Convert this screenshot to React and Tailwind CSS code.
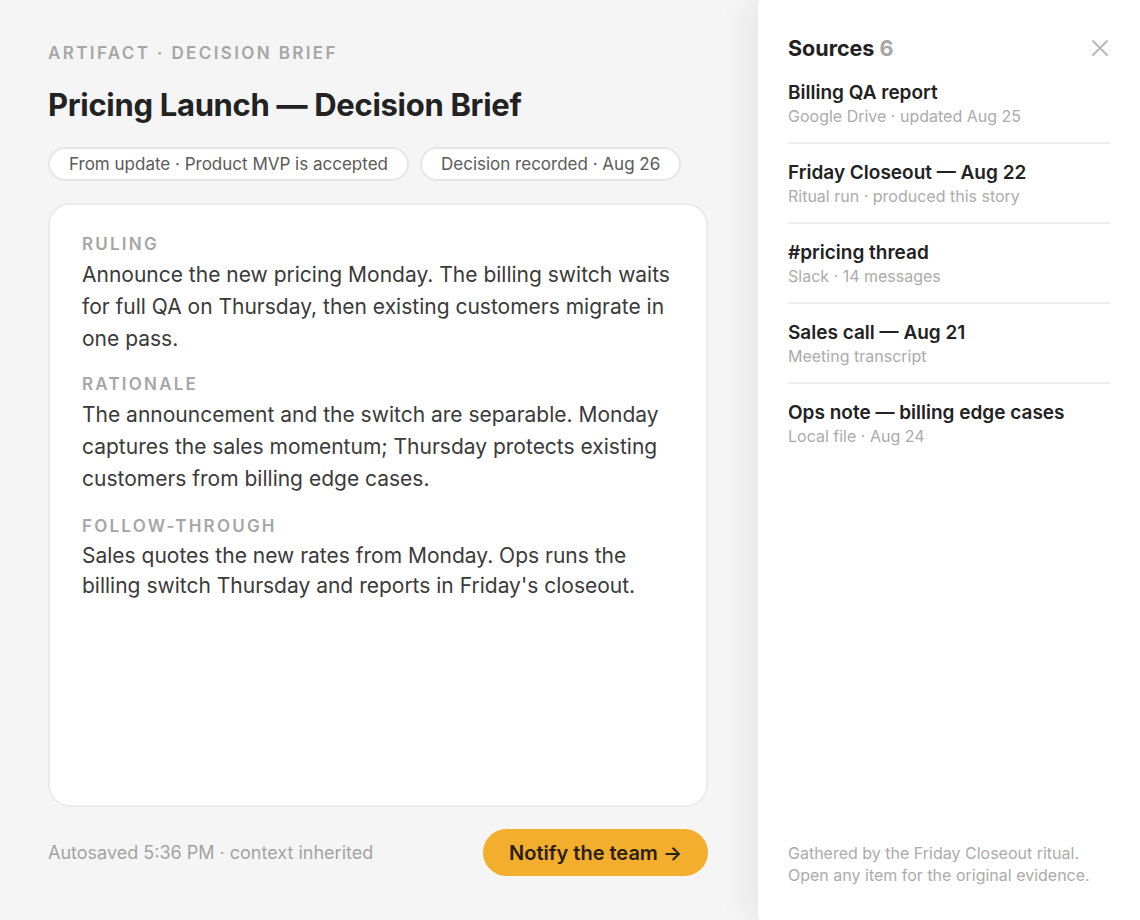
import React from "react";

const sources = [
  { title: "Billing QA report", meta: "Google Drive · updated Aug 25" },
  { title: "Friday Closeout — Aug 22", meta: "Ritual run · produced this story" },
  { title: "#pricing thread", meta: "Slack · 14 messages" },
  { title: "Sales call — Aug 21", meta: "Meeting transcript" },
  { title: "Ops note — billing edge cases", meta: "Local file · Aug 24" },
];

const sections = [
  {
    label: "RULING",
    gap: "",
    lead: "leading-[32px]",
    body: "Announce the new pricing Monday. The billing switch waits for full QA on Thursday, then existing customers migrate in one pass.",
  },
  {
    label: "RATIONALE",
    gap: "mt-[18px]",
    lead: "leading-[32px]",
    body: "The announcement and the switch are separable. Monday captures the sales momentum; Thursday protects existing customers from billing edge cases.",
  },
  {
    label: "FOLLOW-THROUGH",
    gap: "mt-[20px]",
    lead: "leading-[30px]",
    body: "Sales quotes the new rates from Monday. Ops runs the billing switch Thursday and reports in Friday's closeout.",
  },
];

function CloseIcon() {
  return (
    <svg width="18" height="18" viewBox="0 0 18 18" fill="none" stroke="#b5b5b5" strokeWidth="1.8" strokeLinecap="round">
      <path d="M2 2 L16 16 M16 2 L2 16" />
    </svg>
  );
}

export default function App() {
  return (
    <div
      className="flex h-[920px] w-[1140px] bg-[#f5f5f5] text-[#262626] overflow-hidden"
      style={{ fontFamily: "Inter, 'Noto Sans', sans-serif" }}
    >
      {/* Brief */}
      <main className="flex w-[758px] shrink-0 flex-col pl-12 pr-[50px] pt-[42px] pb-[44px]">
        <div className="text-[17px] font-semibold tracking-[0.14em] text-[#a6a6a6] leading-[22px]">
          ARTIFACT · DECISION BRIEF
        </div>
        <h1 className="mt-[23px] text-[31px] font-bold leading-[36px] tracking-[-0.01em] text-[#222]">
          Pricing Launch — Decision Brief
        </h1>
        <div className="mt-[24px] flex gap-[11px]">
          <span className="rounded-full border-2 border-[#e6e6e6] bg-white px-[19px] py-[3px] text-[17px] leading-[24px] text-[#5a5a5a]">
            From update · Product MVP is accepted
          </span>
          <span className="rounded-full border-2 border-[#e6e6e6] bg-white px-[19px] py-[3px] text-[17px] leading-[24px] text-[#5a5a5a]">
            Decision recorded · Aug 26
          </span>
        </div>

        <section className="mt-[22px] flex-1 rounded-[22px] border-2 border-[#ebebeb] bg-white px-[32px] pt-[28px]">
          {sections.map((s) => (
            <div key={s.label} className={s.gap}>
              <div className="text-[17px] font-semibold tracking-[0.13em] leading-[22px] text-[#a6a6a6]">
                {s.label}
              </div>
              <p className={"mt-[4px] text-[21px] text-[#3a3a3a] " + s.lead}>{s.body}</p>
            </div>
          ))}
        </section>

        <footer className="mt-[22px] flex items-center justify-between">
          <span className="text-[18px] text-[#a3a3a3]">Autosaved 5:36 PM · context inherited</span>
          <button className="h-[47px] rounded-full bg-[#f4ae2e] px-[26px] text-[20px] font-semibold text-[#2a2110]">
            Notify the team →
          </button>
        </footer>
      </main>

      {/* Sources */}
      <aside className="relative flex w-[382px] shrink-0 flex-col bg-white pl-[30px] pr-[30px] pt-[34px] pb-[34px] shadow-[-12px_0_28px_rgba(0,0,0,0.06)]">
        <div className="flex items-center justify-between">
          <h2 className="text-[21.5px] font-bold leading-[28px] text-[#222]">
            Sources <span className="text-[#a6a6a6]">6</span>
          </h2>
          <button className="mr-[1px]">
            <CloseIcon />
          </button>
        </div>
        <ul className="mt-[18px]">
          {sources.map((s, i) => (
            <li
              key={s.title}
              className={"pb-[16px] " + (i < sources.length - 1 ? "border-b-2 border-[#efefef] mb-[16px]" : "")}
            >
              <div className="text-[19px] font-semibold leading-[26px] text-[#222]">{s.title}</div>
              <div className="text-[16px] leading-[20px] text-[#ababab]">{s.meta}</div>
            </li>
          ))}
        </ul>
        <p className="mt-auto text-[16px] leading-[22px] text-[#ababab]">
          Gathered by the Friday Closeout ritual.
          <br />
          Open any item for the original evidence.
        </p>
      </aside>
    </div>
  );
}
